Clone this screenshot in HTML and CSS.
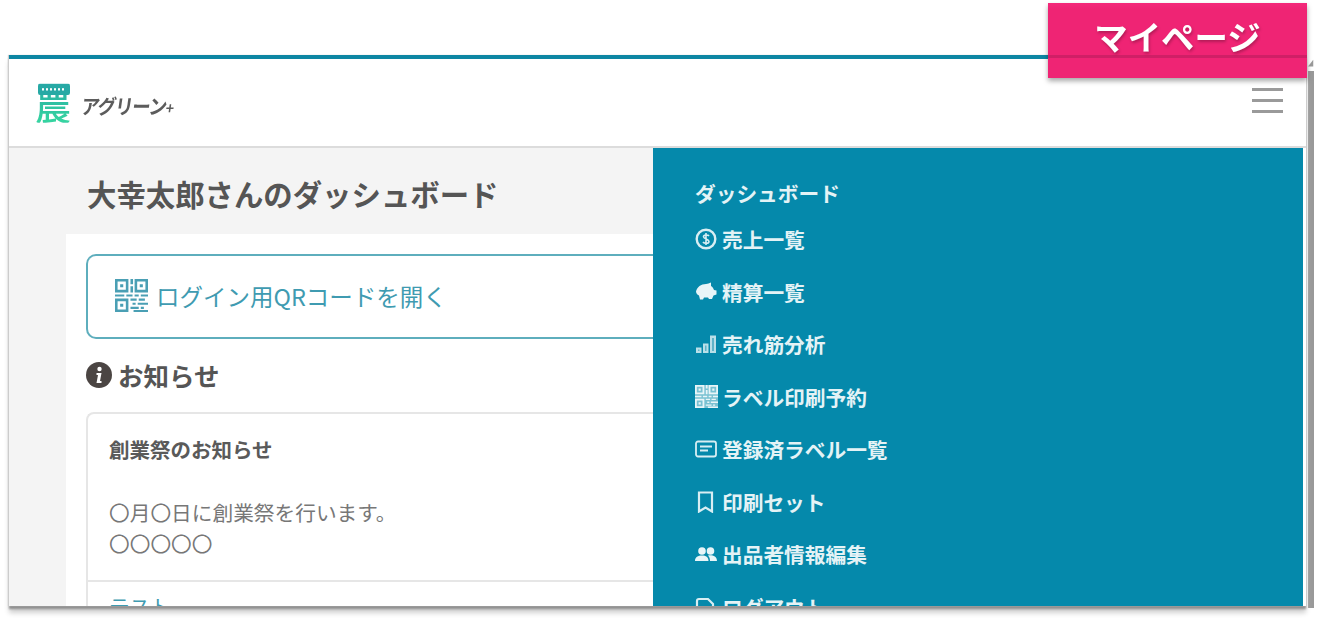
FILE: index.html
```html
<!DOCTYPE html>
<html lang="ja">
<head>
    <meta charset="UTF-8">
    <title>マイページ</title>
    <link rel="stylesheet" href="styles.css">
</head>
<body>
    <a class="badge">マイページ</a>
    <div class="scroll-track">
        <svg class="scroll-arrow" viewBox="0 0 8 10"><path d="M7 0v9H0z" fill="#999"/></svg>
        <div class="scroll-thumb"></div>
    </div>

    <svg class="defs" width="0" height="0">
        <symbol id="qr" viewBox="0 0 32 32">
            <path fill-rule="evenodd" d="M0 0h13v13H0zM2.500 2.500v8h8v-8zM19 0h13v13H19zM21.500 2.500v8h8v-8zM0 19h13v13H0zM2.500 21.500v8h8v-8z"/>
            <path d="M5 5h3v3H5zM24 5h3v3h-3zM5 24h3v3H5zM15 0h2.500v5H15zM15 7h2.500v6H15zM0 15h9v2H0zM11 15h6v2h-6zM19 15h4v2h-4zM25 15h7v2h-7zM15 19h6v2h-6zM23 19h6v2h-6zM17 23h3v2h-3zM22 23h10v2H22zM15 27h8v2h-8zM25 27h3v2h-3zM18 30h14v2H18z"/>
        </symbol>
    </svg>

    <div class="shot">
        <header class="topbar">
            <div class="logo">
                <span class="logo-mark">農</span>
                <span class="logo-name">アグリーン<small>+</small></span>
            </div>
            <div class="burger"><i></i><i></i><i></i></div>
        </header>

        <div class="columns">
            <main class="left">
                <h1 class="page-title">大幸太郎さんのダッシュボード</h1>
                <div class="sheet">
                    <a class="qr-btn">
                        <svg class="qr-icon"><use href="#qr"/></svg>
                        <span>ログイン用QRコードを開く</span>
                    </a>

                    <h2 class="news-title">
                        <svg class="info-icon" viewBox="0 0 26 26"><circle cx="13" cy="13" r="13" fill="#4b4543"/><circle cx="13.500" cy="7" r="2.200" fill="#fff"/><path d="M10.500 11h5l-1.500 8h1.500v2h-5l1.500-8h-1.500z" fill="#fff"/></svg>
                        お知らせ
                    </h2>

                    <section class="news-card">
                        <div class="news-body">
                            <h3>創業祭のお知らせ</h3>
                            <p>〇月〇日に創業祭を行います。<br>〇〇〇〇〇</p>
                        </div>
                        <div class="news-foot"><a>テスト</a></div>
                    </section>
                </div>
            </main>

            <nav class="menu">
                <a class="menu-head">ダッシュボード</a>
                <a class="menu-item">
                    <svg viewBox="0 0 22 22" fill="none" stroke="#d8eef3" stroke-width="2.400"><circle cx="11" cy="11" r="9.300"/><path d="M14 8c-1-1.500-5.500-1.500-5.500.8S14 11 14 13.500s-5 2-6 .5M11 5v12" stroke-width="1.600"/></svg>
                    売上一覧
                </a>
                <a class="menu-item">
                    <svg viewBox="0 0 22 22"><path d="M1 10.500C2 6 6 3 11 3c2 0 3-.8 5-1.500v3.500c1.500 1 2.500 2.500 3 4l2.500.5v4l-3 1-1.500 3.500h-3L13 16.500H9L8 18.500H5l-1-4C2 13.500 1 12 1 10.500z" fill="#e8f5f8"/></svg>
                    精算一覧
                </a>
                <a class="menu-item">
                    <svg viewBox="0 0 22 22" fill="#b9dfe8"><path d="M1 14.500h5.500V20H1zM8 10.500h5.500V20H8zM15 2.500h6V20h-6z"/><path d="M3 16.500h1.500V18H3zM10 12.500h1.500V18H10zM17 5h2v13h-2z" fill="#5fb3c8"/></svg>
                    売れ筋分析
                </a>
                <a class="menu-item item-qr">
                    <svg class="menu-qr"><use href="#qr"/></svg>
                    ラベル印刷予約
                </a>
                <a class="menu-item">
                    <svg viewBox="0 0 22 22" fill="none" stroke="#d8eef3" stroke-width="1.800"><rect x="1" y="3.500" width="20" height="15" rx="2"/><path d="M5 8.500h12M5 12.500h8"/></svg>
                    登録済ラベル一覧
                </a>
                <a class="menu-item">
                    <svg viewBox="0 0 22 22" fill="none" stroke="#d8eef3" stroke-width="2.200"><path d="M4 1.500h13v19l-6.500-4-6.500 4z"/></svg>
                    印刷セット
                </a>
                <a class="menu-item">
                    <svg viewBox="0 0 22 22" fill="#e8f5f8"><circle cx="7" cy="8" r="3.800"/><circle cx="15.500" cy="8" r="3.800"/><path d="M0 18c0-4 3-5.500 7-5.500s6.500 1.500 6.500 5.500zM15 18c0-2-.5-4-2-5.500 4-.8 9 .5 9 5.500z"/></svg>
                    出品者情報編集
                </a>
                <a class="menu-item">
                    <svg viewBox="0 0 22 22" fill="none" stroke="#d8eef3" stroke-width="2.200"><path d="M2 5c0-1 1-2 2-2h9l5 5v11H2z"/></svg>
                    ログアウト
                </a>
            </nav>
        </div>
    </div>
</body>
</html>
```

FILE: styles.css
```css
* { box-sizing: border-box; }

html, body { height: 100%; }

body {
    margin: 0;
    padding: 55px 0 0 9px;
    overflow: hidden;
    background: #fff;
    color: #555;
    font-family: "Noto Sans CJK JP", "Noto Sans", sans-serif;
}

h1, h2, h3, p { margin: 0; }

.defs { display: block; }

/* the captured page */
.shot {
    width: 1297px;
    height: 551px;
    display: flex;
    flex-direction: column;
    overflow: hidden;
    border-top: 4px solid #0d86a3;
    background: #fff;
    box-shadow: -1px 0 1px #ccc, 0 3px 2px #8f8f8f, 0 7px 5px #d0d0d0;
    filter: blur(0.7px);
}

.topbar {
    flex: none;
    height: 89px;
    display: flex;
    align-items: center;
    justify-content: space-between;
    padding: 0 23px 0 26px;
    background: #fff;
    border-bottom: 2px solid #dcdcdc;
}

.logo { display: flex; align-items: center; gap: 11px; margin-top: -2px; }

.logo-mark {
    position: relative;
    font-size: 36px;
    line-height: 1;
    font-weight: 500;
    background: linear-gradient(#25a7a4, #36d6a0);
    -webkit-background-clip: text;
    background-clip: text;
    color: transparent;
    transform: scaleY(1.15);
}

.logo-mark::before {
    content: "";
    position: absolute;
    left: 3px;
    right: 1px;
    top: 2px;
    height: 10px;
    border-radius: 2px;
    background: repeating-linear-gradient(90deg, #fff 0 2px, #27a9a5 2px 4px) center / 24px 2px no-repeat, #27a9a5;
}

.logo-name {
    font-size: 18.500px;
    font-weight: 700;
    letter-spacing: -1.200px;
    color: #5c5c5c;
    transform: skewX(-8deg) scaleY(1.1);
    padding-top: 6px;
}

.logo-name small { font-size: 14px; font-weight: 700; }

.burger { width: 31px; display: flex; flex-direction: column; gap: 8px; margin-top: -4px; }
.burger i { display: block; height: 3px; background: #9a9a9a; }

.columns { flex: 1; min-height: 0; display: flex; }

.left {
    width: 644px;
    flex: none;
    background: #f4f4f4;
    padding-left: 57px;
    overflow: hidden;
}

.page-title {
    height: 86px;
    padding: 25px 0 0 21px;
    font-size: 29.400px;
    line-height: 40px;
    font-weight: 700;
    color: #555;
    white-space: nowrap;
}

.sheet {
    background: #fff;
    height: 400px;
    padding: 20px 0 0 20px;
}

.qr-btn {
    display: flex;
    align-items: center;
    gap: 8px;
    height: 85px;
    margin-right: -2px;
    padding: 0 0 2px 27px;
    border: 2px solid #5eaebd;
    border-right: 0;
    border-radius: 10px 0 0 10px;
    font-size: 23.500px;
    color: #3f9bb1;
}

.qr-icon { width: 33px; height: 33px; fill: #4a9fb4; }

.news-title {
    display: flex;
    align-items: center;
    gap: 6px;
    height: 73px;
    padding-bottom: 2px;
    font-size: 25.500px;
    font-weight: 700;
    color: #555;
}

.info-icon { width: 26px; height: 26px; }

.news-card {
    border: 2px solid #e6e6e6;
    border-right: 0;
    border-radius: 8px 0 0 0;
}

.news-body { height: 168px; padding: 17px 0 0 21px; border-bottom: 2px solid #e6e6e6; }

.news-body h3 { font-size: 20.500px; line-height: 36px; font-weight: 700; color: #5a5a5a; }

.news-body p { margin-top: 30px; font-size: 20.700px; line-height: 31px; color: #777; }

.news-foot { padding: 9px 0 0 21px; font-size: 20.500px; line-height: 30px; color: #3f9bb1; }

.menu {
    width: 653px;
    flex: none;
    display: flex;
    flex-direction: column;
    padding: 27px 0 0 42px;
    background: #0589ab;
    border-right: 3px solid #fff;
    overflow: hidden;
    color: #e4f3f6;
    font-size: 20.700px;
    font-weight: 700;
}

.menu-head { flex: none; height: 38px; line-height: 36px; }

.menu-item {
    display: flex;
    align-items: center;
    gap: 5px;
    flex: none;
    height: 52.500px;
    white-space: nowrap;
}

.menu-item svg { width: 22px; height: 22px; flex: none; }

.item-qr { gap: 4px; }
.menu-item .menu-qr { width: 23px; height: 23px; fill: #e8f5f8; background: rgba(216, 238, 243, 0.55); }

/* overlays on top of the capture */
.badge {
    position: absolute;
    left: 1048px;
    top: 3px;
    z-index: 2;
    width: 259px;
    height: 75px;
    padding-top: 8px;
    text-align: center;
    font-size: 33.400px;
    line-height: 50px;
    font-weight: 700;
    color: #fff;
    background: linear-gradient(#f4297b 0, #ef2474 6px, #ef2474 100%);
    box-shadow: 0 3px 5px rgba(0, 0, 0, 0.35), inset 0 -20px 0 #ef2474, inset 0 -23px 0 #cf1f66;
    text-shadow: 1px 2px 3px rgba(0, 0, 0, 0.25);
}

.scroll-track {
    position: absolute;
    left: 1308px;
    top: 59px;
    width: 6px;
    height: 549px;
    display: flex;
    flex-direction: column;
    gap: 3px;
}

.scroll-arrow { width: 6px; height: 9px; flex: none; }
.scroll-thumb { flex: 1; background: #999; }
```
